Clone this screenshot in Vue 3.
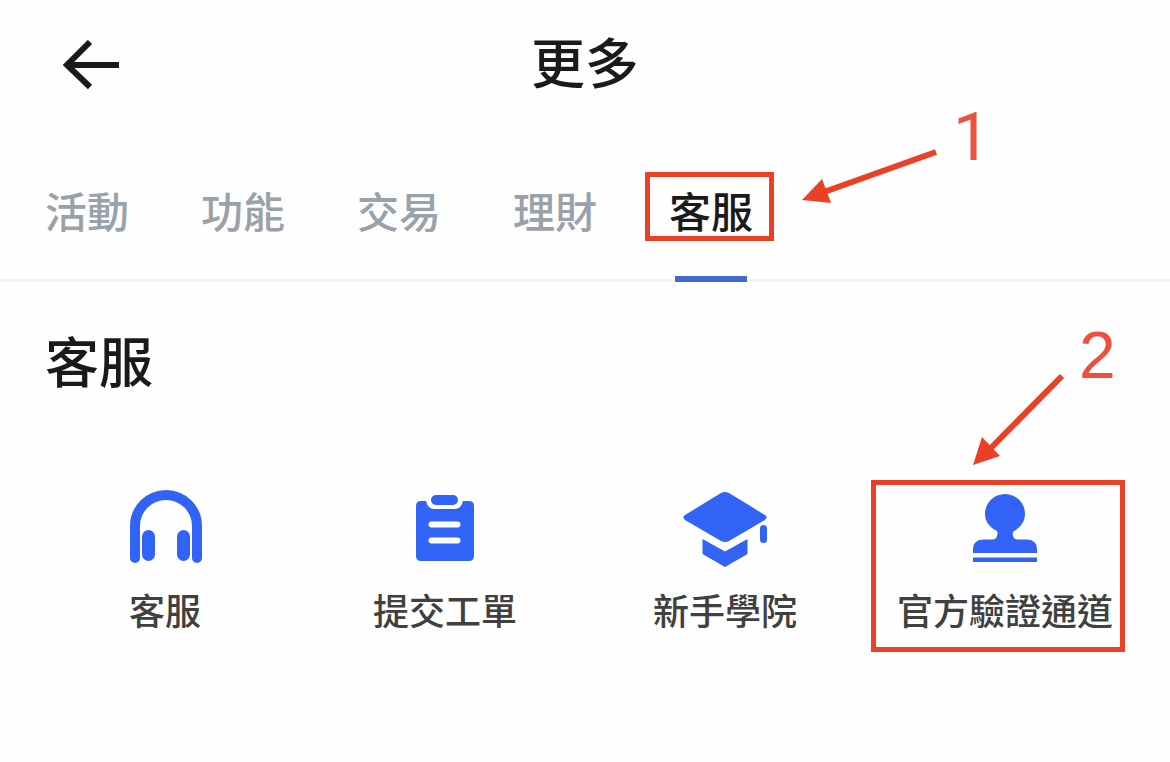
<script setup>
import { ref } from 'vue'

const tabs = ['活動', '功能', '交易', '理財', '客服']
const active = ref('客服')
const services = [
  { label: '客服', icon: 'headset' },
  { label: '提交工單', icon: 'ticket' },
  { label: '新手學院', icon: 'academy' },
  { label: '官方驗證通道', icon: 'stamp', marked: true },
]
</script>

<template>
  <div class="page">
    <header class="header">
      <button class="back" type="button" aria-label="返回">
        <svg width="60" height="50" viewBox="0 0 60 50" fill="none" stroke="#1a1a1a" stroke-width="6">
          <path d="M28 2 L5 25 L28 47 M5 25 H57" />
        </svg>
      </button>
      <h1 class="title">更多</h1>
    </header>

    <nav class="tabs">
      <button
        v-for="tab in tabs"
        :key="tab"
        type="button"
        class="tab"
        :class="{ active: tab === active }"
        @click="active = tab"
      >
        {{ tab }}
        <template v-if="tab === '客服'">
          <span class="frame frame-tab"></span>
          <span class="step step-one">1</span>
          <svg class="arrow arrow-one" width="140" height="60" viewBox="0 0 140 60">
            <path d="M24 47 L136 7" stroke="#ea4025" stroke-width="6" />
            <path d="M2 55 L22 34 L31 58 Z" fill="#ea4025" />
          </svg>
        </template>
      </button>
    </nav>

    <main class="content">
      <h2 class="heading">客服</h2>
      <div class="grid">
        <button v-for="item in services" :key="item.label" type="button" class="item">
          <svg class="icon" width="90" height="90" viewBox="0 0 90 90" fill="#3164f6">
            <template v-if="item.icon === 'headset'">
              <path d="M15 74 V42 A31 31 0 0 1 77 42 V74" fill="none" stroke="#3164f6" stroke-width="10" stroke-linecap="round" />
              <rect x="22" y="46" width="13" height="31" rx="6.5" />
              <rect x="57" y="46" width="13" height="31" rx="6.5" />
            </template>
            <template v-else-if="item.icon === 'ticket'">
              <rect x="31" y="11" width="27" height="10" rx="5" />
              <path d="M21 17 H26 Q28 25 34 25 H55 Q61 25 63 17 H69 Q74 17 74 22 V72 Q74 77 69 77 H21 Q16 77 16 72 V22 Q16 17 21 17 Z" />
              <path d="M31.500 40.500 H57.500 M31.500 56.500 H57.500" stroke="#fefefe" stroke-width="6" stroke-linecap="round" />
            </template>
            <template v-else-if="item.icon === 'academy'">
              <path d="M41 9 Q45 7 49 9 L85 31 Q88 33 85 36 L49 57 Q45 59 41 57 L5 36 Q2 33 5 31 Z" />
              <path d="M22.500 55 L45 67.500 L67.500 55 V70 L45 83 L22.500 70 Z" />
              <rect x="80" y="41" width="7" height="18" rx="3.500" />
            </template>
            <template v-else>
              <path d="M37 47 C29 43 25 37 25 30 A20 20 0 0 1 65 30 C65 37 61 43 54 47 Q52 49 53 52 Q54 55.500 58 55.500 H67 Q77 56 77 65 V69 H13 V65 Q13 56 23 55.500 H32 Q36 55.500 37 52 Q38 49 37 47 Z" />
              <rect x="13" y="73.500" width="64" height="4.500" />
            </template>
          </svg>
          <span class="label">{{ item.label }}</span>
          <template v-if="item.marked">
            <span class="frame frame-item"></span>
            <span class="step step-two">2</span>
            <svg class="arrow arrow-two" width="100" height="100" viewBox="0 0 100 100">
              <path d="M19 80 L92 6" stroke="#ea4025" stroke-width="6" />
              <path d="M3 95 L12 67 L30 86 Z" fill="#ea4025" />
            </svg>
          </template>
        </button>
      </div>
    </main>
  </div>
</template>

<style>
body {
  margin: 0;
  background: #fefefe;
}
</style>

<style scoped>
.page {
  font-family: "Noto Sans CJK TC", "Noto Sans CJK SC", sans-serif;
  color: #1a1a1a;
}

button {
  padding: 0;
  border: 0;
  background: none;
  font: inherit;
  color: inherit;
  cursor: pointer;
}

.header {
  display: grid;
  grid-template-columns: 1fr auto 1fr;
  align-items: center;
  height: 122px;
  padding: 0 62px;
}

.back {
  justify-self: start;
  height: 50px;
  margin-top: 8px;
}

.back svg {
  display: block;
}

.title,
.heading {
  margin: 0;
  font-size: 54px;
  font-weight: 500;
  line-height: 80px;
}

.tabs {
  display: flex;
  gap: 72px;
  padding: 58px 45px 39px;
  border-bottom: 3px solid #f2f2f3;
}

.tab {
  position: relative;
  flex: none;
  font-size: 42px;
  line-height: 60px;
  color: #99a1aa;
  font-weight: 500;
}

.tab.active {
  color: #1a1a1a;
}

.tab.active::after {
  content: "";
  position: absolute;
  left: 6px;
  right: 6px;
  bottom: -42px;
  height: 6px;
  background: #4169d0;
}

.content {
  padding: 38px 25px 40px;
}

.heading {
  padding: 0 20px;
}

.grid {
  display: grid;
  grid-template-columns: repeat(4, 1fr);
  padding-top: 84px;
}

.item {
  position: relative;
  display: flex;
  flex-direction: column;
  align-items: center;
  gap: 10px;
}

.icon {
  display: block;
}

.label {
  font-size: 36px;
  line-height: 50px;
  color: #404040;
  font-weight: 500;
  white-space: nowrap;
}

.frame {
  position: absolute;
  border: 5px solid #ea4025;
  pointer-events: none;
}

.frame-tab {
  inset: -8px -21px -1px -24px;
}

.frame-item {
  inset: -4px 20px -18px 6px;
}

.step {
  position: absolute;
  font-size: 66px;
  line-height: 76px;
  font-weight: 400;
  color: #ee4f3f;
}

.step-one {
  left: 284px;
  top: -80px;
  font-family: Roboto, sans-serif;
}

.step-two {
  left: 214px;
  top: -167px;
  font-family: "Liberation Sans", sans-serif;
}

.arrow {
  position: absolute;
  pointer-events: none;
}

.arrow-one {
  left: 131px;
  top: -35px;
}

.arrow-two {
  left: 105px;
  top: -114px;
}
</style>
